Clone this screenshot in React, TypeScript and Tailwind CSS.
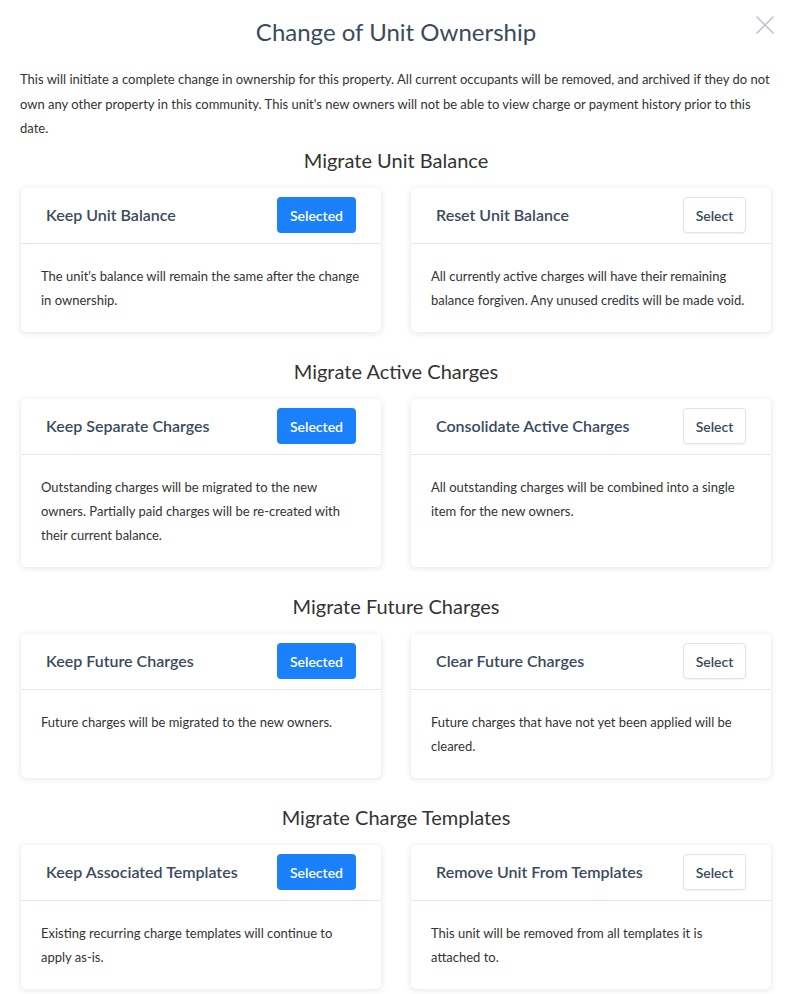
const sections = [
	{
		title: "Migrate Unit Balance",
		options: [
			{ name: "Keep Unit Balance", selected: true, text: "The unit's balance will remain the same after the change in ownership." },
			{ name: "Reset Unit Balance", selected: false, text: "All currently active charges will have their remaining balance forgiven. Any unused credits will be made void." },
		],
	},
	{
		title: "Migrate Active Charges",
		options: [
			{ name: "Keep Separate Charges", selected: true, text: "Outstanding charges will be migrated to the new owners. Partially paid charges will be re-created with their current balance." },
			{ name: "Consolidate Active Charges", selected: false, text: "All outstanding charges will be combined into a single item for the new owners." },
		],
	},
	{
		title: "Migrate Future Charges",
		options: [
			{ name: "Keep Future Charges", selected: true, text: "Future charges will be migrated to the new owners." },
			{ name: "Clear Future Charges", selected: false, text: "Future charges that have not yet been applied will be cleared." },
		],
	},
	{
		title: "Migrate Charge Templates",
		options: [
			{ name: "Keep Associated Templates", selected: true, text: "Existing recurring charge templates will continue to apply as-is." },
			{ name: "Remove Unit From Templates", selected: false, text: "This unit will be removed from all templates it is attached to." },
		],
	},
]

function OptionCard({ name, selected, text }: { name: string; selected: boolean; text: string }) {
	return (
		<div className="flex flex-col bg-white rounded-[5px] shadow-[0_1px_6px_rgba(30,40,60,0.13)]">
			<div className="flex flex-row items-center justify-between h-[56px] px-[25px] border-b border-[#e2e6ee]">
				<span className="text-[16px] font-semibold text-[#3b4a5e]">{name}</span>
				{selected ? (
					<button className="h-[36px] w-[79px] rounded-[4px] bg-[#1a80fb] text-white text-[14px] font-semibold">Selected</button>
				) : (
					<button className="h-[36px] w-[63px] rounded-[4px] bg-white border border-[#dfe3ea] shadow-[0_1px_2px_rgba(0,0,0,0.06)] text-[#3b4a5e] text-[14px] font-semibold">Select</button>
				)}
			</div>
			<p className="px-[20px] py-[20px] text-[13px] leading-[24px] text-[#333]">{text}</p>
		</div>
	)
}

export default function App() {
	return (
		<div className="w-[787px] bg-white pl-[21px] pr-[16px] pb-[6px] font-['Lato',sans-serif] text-[#333]">
			<div className="relative flex justify-center pt-[16px]">
				<h1 className="text-[24px] leading-[32px] text-[#3b4a5e]">Change of Unit Ownership</h1>
				<svg className="absolute right-[-4px] top-[15px]" width="20" height="20" viewBox="0 0 20 20">
					<path d="M1.5 1.5 L18.5 18.5 M18.5 1.5 L1.5 18.5" stroke="#b9c1cd" strokeWidth="1.5" />
				</svg>
			</div>
			<p className="mt-[19px] -ml-[1px] text-[13px] leading-[24.5px]">
				This will initiate a complete change in ownership for this property. All current occupants will be removed, and archived if they do not own any other property in this community. This unit's new owners will not be able to view charge or payment history prior to this date.
			</p>
			{sections.map((s, i) => (
				<div key={s.title} className={i === 0 ? "mt-[7px]" : "mt-[27px]"}>
					<h2 className="text-center text-[20px] leading-[24px] text-[#333] mb-[16px]">{s.title}</h2>
					<div className="grid grid-cols-2 gap-[30px]">
						{s.options.map((o) => (
							<OptionCard key={o.name} {...o} />
						))}
					</div>
				</div>
			))}
		</div>
	)
}
